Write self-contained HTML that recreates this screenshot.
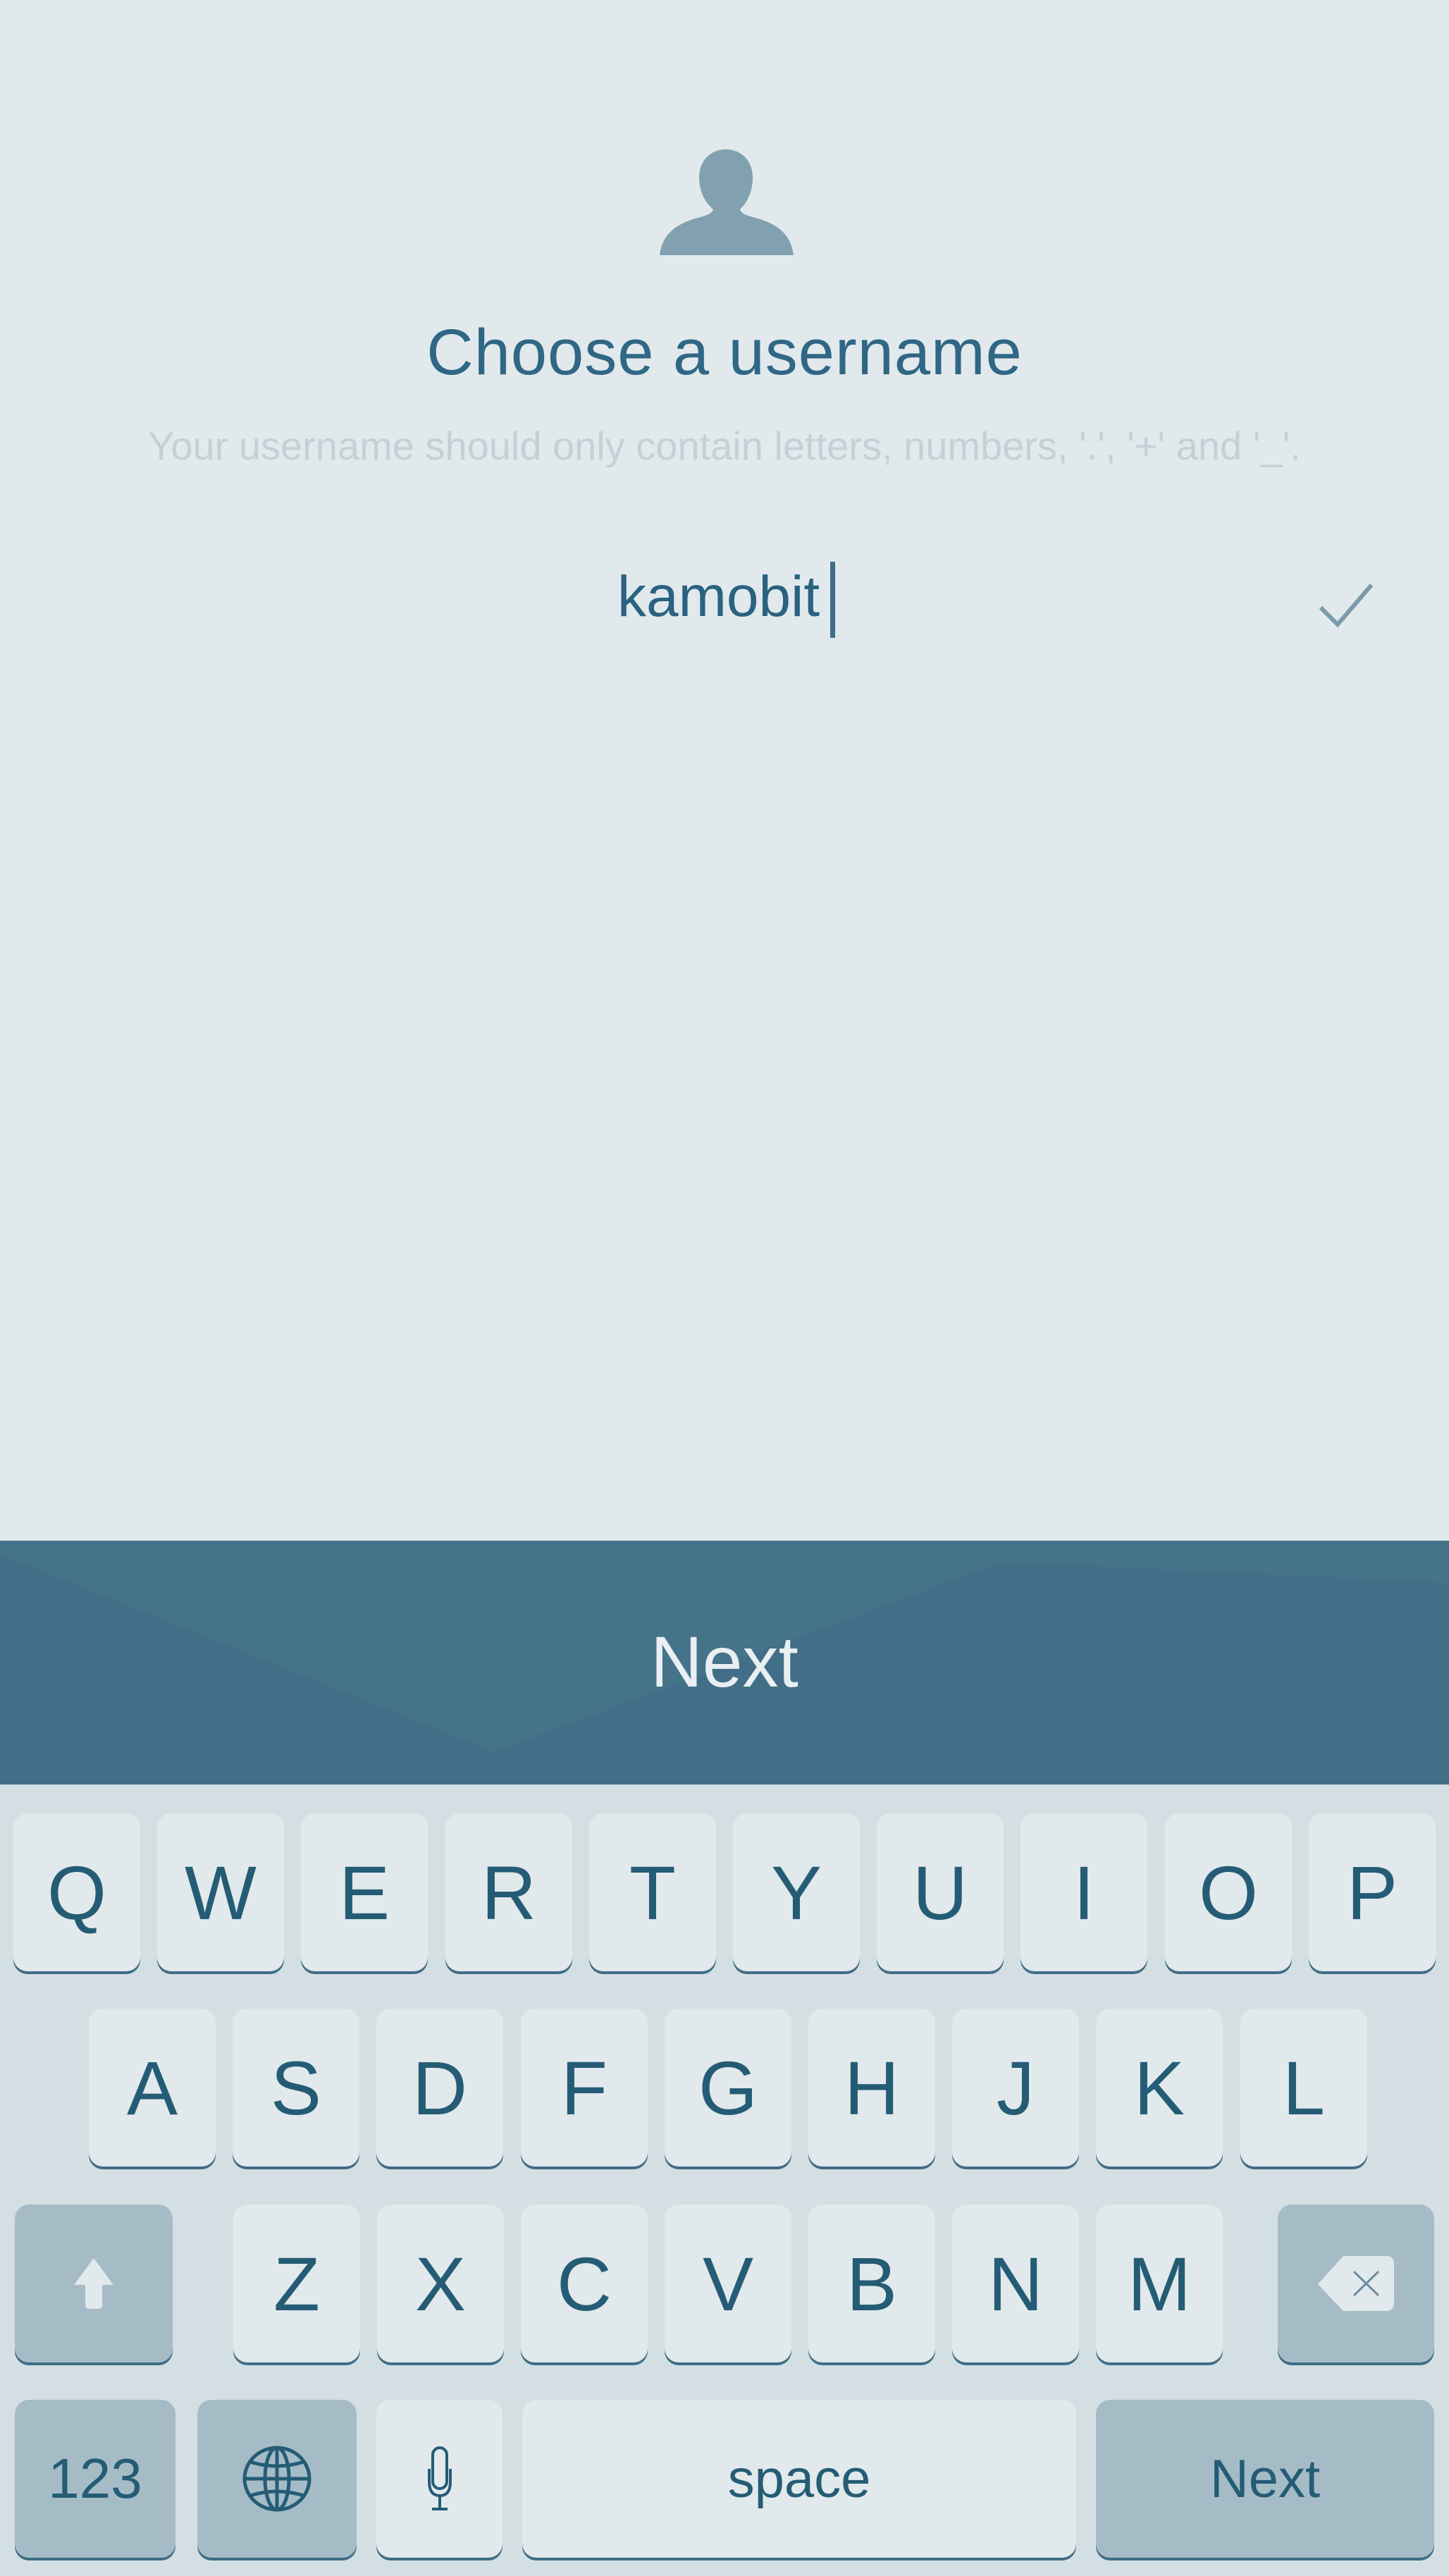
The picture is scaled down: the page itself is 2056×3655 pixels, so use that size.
<!DOCTYPE html>
<html><head><meta charset="utf-8">
<style>
html,body{margin:0;padding:0;}
body{width:2056px;height:3655px;background:#e1e9ec;position:relative;overflow:hidden;font-family:"Liberation Sans",sans-serif;}
.abs{position:absolute;}
.title{left:0;width:2056px;top:448px;text-align:center;font-size:92px;color:#2f6785;letter-spacing:1px;}
.sub{left:0;width:2056px;top:600px;text-align:center;font-size:56px;color:#c3d1d7;}
.user{left:876px;top:800px;font-size:82px;color:#2a6280;}
.cursor{left:1178px;top:797px;width:7px;height:108px;background:#3a6f8b;}
.bar{left:0;top:2186px;width:2056px;height:346px;background:#45738a;overflow:hidden;}
.barnext{left:0;width:2056px;top:2300px;text-align:center;font-size:102px;color:#e9eff2;}
.kb{left:0;top:2532px;width:2056px;height:1123px;background:#d4dfe4;}
.key{position:absolute;background:#e1e9ec;border-radius:20px;box-shadow:0 4px 0 #3f6d85;color:#255c75;text-align:center;font-size:108px;display:flex;align-items:center;justify-content:center;}
.sp{background:#a5bcc7;}
</style></head><body>

<svg class="abs" style="left:930px;top:205px" width="200" height="165" viewBox="930 205 200 165">
<path fill="#82a1b0" d="M1030 212 C1052 212 1068 228 1068 252 C1068 272 1060 288 1050 297 C1052 303 1058 305 1068 308 C1100 316 1122 330 1126 362 L936 362 C940 330 962 316 994 308 C1004 305 1010 303 1012 297 C1001 288 992 272 992 252 C992 228 1008 212 1030 212Z"/>
</svg>

<div class="abs title">Choose a username</div>
<div class="abs sub">Your username should only contain letters, numbers, '.', '+' and '_'.</div>
<div class="abs user">kamobit</div>
<div class="abs cursor"></div>
<svg class="abs" style="left:1868px;top:822px" width="84" height="72" viewBox="0 0 84 72">
<path d="M6 40 L30 64 L78 8" fill="none" stroke="#7a9bab" stroke-width="6"/>
</svg>

<div class="abs bar">
<svg width="2056" height="346" style="position:absolute;left:0;top:0">
<polygon points="0,20 700,300 1420,30 2056,60 2056,346 0,346" fill="#3f6c83" opacity="0.5"/>
</svg>
</div>
<div class="abs barnext">Next</div>

<div class="abs kb"></div>

<div class="key" style="left:19px;top:2573px;width:180px;height:224px">Q</div>
<div class="key" style="left:223px;top:2573px;width:180px;height:224px">W</div>
<div class="key" style="left:427px;top:2573px;width:180px;height:224px">E</div>
<div class="key" style="left:632px;top:2573px;width:180px;height:224px">R</div>
<div class="key" style="left:836px;top:2573px;width:180px;height:224px">T</div>
<div class="key" style="left:1040px;top:2573px;width:180px;height:224px">Y</div>
<div class="key" style="left:1244px;top:2573px;width:180px;height:224px">U</div>
<div class="key" style="left:1448px;top:2573px;width:180px;height:224px">I</div>
<div class="key" style="left:1653px;top:2573px;width:180px;height:224px">O</div>
<div class="key" style="left:1857px;top:2573px;width:180px;height:224px">P</div>

<div class="key" style="left:126px;top:2850px;width:180px;height:224px">A</div>
<div class="key" style="left:330px;top:2850px;width:180px;height:224px">S</div>
<div class="key" style="left:534px;top:2850px;width:180px;height:224px">D</div>
<div class="key" style="left:739px;top:2850px;width:180px;height:224px">F</div>
<div class="key" style="left:943px;top:2850px;width:180px;height:224px">G</div>
<div class="key" style="left:1147px;top:2850px;width:180px;height:224px">H</div>
<div class="key" style="left:1351px;top:2850px;width:180px;height:224px">J</div>
<div class="key" style="left:1555px;top:2850px;width:180px;height:224px">K</div>
<div class="key" style="left:1760px;top:2850px;width:180px;height:224px">L</div>

<div class="key sp" style="left:21px;top:3128px;width:224px;height:224px">
<svg width="60" height="76" viewBox="0 0 60 76"><path d="M30 2 L58 40 L42 40 L42 68 Q42 74 36 74 L24 74 Q18 74 18 68 L18 40 L2 40 Z" fill="#e1e9ec"/></svg>
</div>
<div class="key" style="left:331px;top:3128px;width:180px;height:224px">Z</div>
<div class="key" style="left:535px;top:3128px;width:180px;height:224px">X</div>
<div class="key" style="left:739px;top:3128px;width:180px;height:224px">C</div>
<div class="key" style="left:943px;top:3128px;width:180px;height:224px">V</div>
<div class="key" style="left:1147px;top:3128px;width:180px;height:224px">B</div>
<div class="key" style="left:1351px;top:3128px;width:180px;height:224px">N</div>
<div class="key" style="left:1555px;top:3128px;width:180px;height:224px">M</div>
<div class="key sp" style="left:1813px;top:3128px;width:222px;height:224px">
<svg width="112" height="82" viewBox="0 0 112 82"><path d="M38 2 L100 2 Q110 2 110 14 L110 68 Q110 80 98 80 L38 80 L2 42 Z" fill="#e1e9ec"/><path d="M53 24 L88 58 M88 24 L53 58" stroke="#6d8e9f" stroke-width="3"/></svg>
</div>

<div class="key sp" style="left:21px;top:3405px;width:228px;height:224px;font-size:80px">123</div>
<div class="key sp" style="left:280px;top:3405px;width:226px;height:224px">
<svg width="100" height="96" viewBox="0 0 100 96"><g fill="none" stroke="#255c75" stroke-width="5"><ellipse cx="50" cy="48" rx="46" ry="44"/><ellipse cx="50" cy="48" rx="17" ry="44"/><line x1="50" y1="4" x2="50" y2="92"/><line x1="4" y1="48" x2="96" y2="48"/><path d="M12 24 Q50 36 88 24"/><path d="M12 72 Q50 60 88 72"/></g></svg>
</div>
<div class="key" style="left:534px;top:3405px;width:179px;height:224px">
<svg width="34" height="92" viewBox="0 0 34 92"><g fill="none" stroke="#255c75" stroke-width="4"><rect x="7" y="2" width="20" height="58" rx="10"/><path d="M2 32 L2 50 Q2 70 17 70 Q32 70 32 50 L32 32"/><line x1="17" y1="70" x2="17" y2="88"/><line x1="6" y1="89" x2="28" y2="89"/></g></svg>
</div>
<div class="key" style="left:741px;top:3405px;width:786px;height:224px;font-size:76px">space</div>
<div class="key sp" style="left:1555px;top:3405px;width:480px;height:224px;font-size:76px">Next</div>

</body></html>
